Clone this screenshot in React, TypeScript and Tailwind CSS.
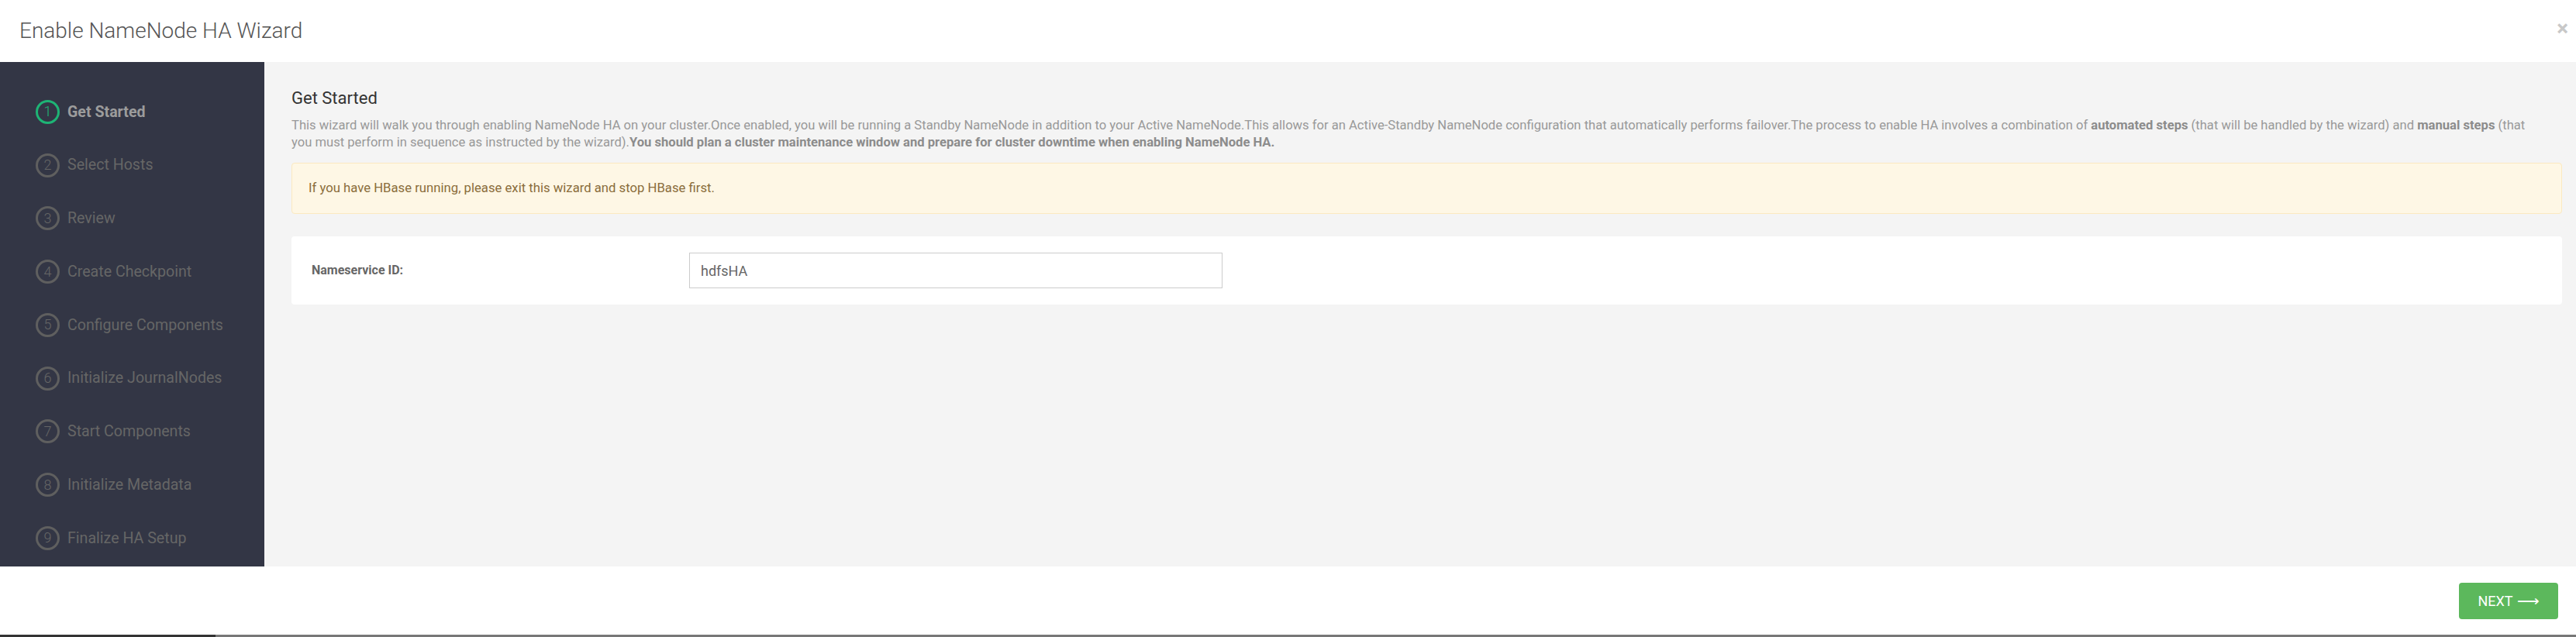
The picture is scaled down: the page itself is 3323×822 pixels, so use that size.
import React from 'react';

const steps = [
  'Get Started',
  'Select Hosts',
  'Review',
  'Create Checkpoint',
  'Configure Components',
  'Initialize JournalNodes',
  'Start Components',
  'Initialize Metadata',
  'Finalize HA Setup',
];

function StepItem({ index, label, active }: { index: number; label: string; active: boolean }) {
  return (
    <li className="flex h-[68.75px] items-center pl-[46px]">
      <span
        className={`flex h-[31px] w-[31px] shrink-0 items-center justify-center rounded-full border-[3px] text-[18px] font-light leading-none ${
          active ? 'border-[#1eb475] text-[#1eb475]' : 'border-[#5f5f5f] text-[#666]'
        }`}
      >
        {index}
      </span>
      <span
        className={`ml-[10px] text-[19.6px] leading-none ${
          active ? 'font-bold text-[#9c9c9c]' : 'text-[#666]'
        }`}
      >
        {label}
      </span>
    </li>
  );
}

export default function App() {
  return (
    <div className="flex h-[822px] w-full flex-col bg-white font-['Roboto','Liberation_Sans',sans-serif]">
      {/* Header */}
      <div className="flex h-[80px] shrink-0 items-center justify-between pl-[25px] pr-[10px]">
        <h1 className="text-[28px] font-light text-[#555]">Enable NameNode HA Wizard</h1>
        <button className="mb-[6px] text-[28px] font-bold leading-none text-[#c8c8c8]">×</button>
      </div>

      {/* Body */}
      <div className="flex h-[651px] shrink-0">
        <aside className="w-[341px] shrink-0 bg-[#333645] pt-[30px]">
          <ul>
            {steps.map((s, i) => (
              <StepItem key={s} index={i + 1} label={s} active={i === 0} />
            ))}
          </ul>
        </aside>

        <main className="flex-1 bg-[#f4f4f4] pl-[35px] pr-[18px] pt-[34px]">
          <h2 className="text-[22px] leading-[26px] text-[#333]">Get Started</h2>
          <p className="mt-[11px] text-[16.6px] leading-[22px] text-[#999]">
            This wizard will walk you through enabling NameNode HA on your cluster.Once enabled, you will be running a
            Standby NameNode in addition to your Active NameNode.This allows for an Active-Standby NameNode configuration
            that automatically performs failover.The process to enable HA involves a combination of{' '}
            <b className="text-[#8c8c8c]">automated steps</b> (that will be handled by the wizard) and{' '}
            <b className="text-[#8c8c8c]">manual steps</b> (that
            <br />
            you must perform in sequence as instructed by the wizard).
            <b className="text-[#8c8c8c]">
              You should plan a cluster maintenance window and prepare for cluster downtime when enabling NameNode HA.
            </b>
          </p>

          <div className="mt-[15px] flex h-[66px] items-center rounded-[4px] border border-[#fbe9c0] bg-[#fef7e5] px-[21px] text-[16.7px] text-[#8a6d3b]">
            If you have HBase running, please exit this wizard and stop HBase first.
          </div>

          <div className="mt-[29px] flex h-[88px] items-center rounded-[4px] bg-white pl-[26px]">
            <label className="w-[487px] text-[16px] font-bold text-[#666]">Nameservice ID:</label>
            <input
              readOnly
              value="hdfsHA"
              className="h-[46px] w-[688px] border border-[#ccc] bg-white px-[14px] text-[18px] text-[#666] outline-none"
            />
          </div>
        </main>
      </div>

      {/* Footer */}
      <div className="flex h-[88px] shrink-0 items-center justify-end pr-[23px]">
        <button className="flex h-[47px] w-[128px] items-center justify-center gap-[5px] rounded-[4px] bg-[#5cb85c] text-[18px] text-white">
          NEXT <span className="text-[20px] leading-none">⟶</span>
        </button>
      </div>

      {/* bottom scroll bar */}
      <div className="flex h-[3px] shrink-0">
        <div className="w-[278px] bg-[#333]" />
        <div className="flex-1 bg-[#777]" />
      </div>
    </div>
  );
}
